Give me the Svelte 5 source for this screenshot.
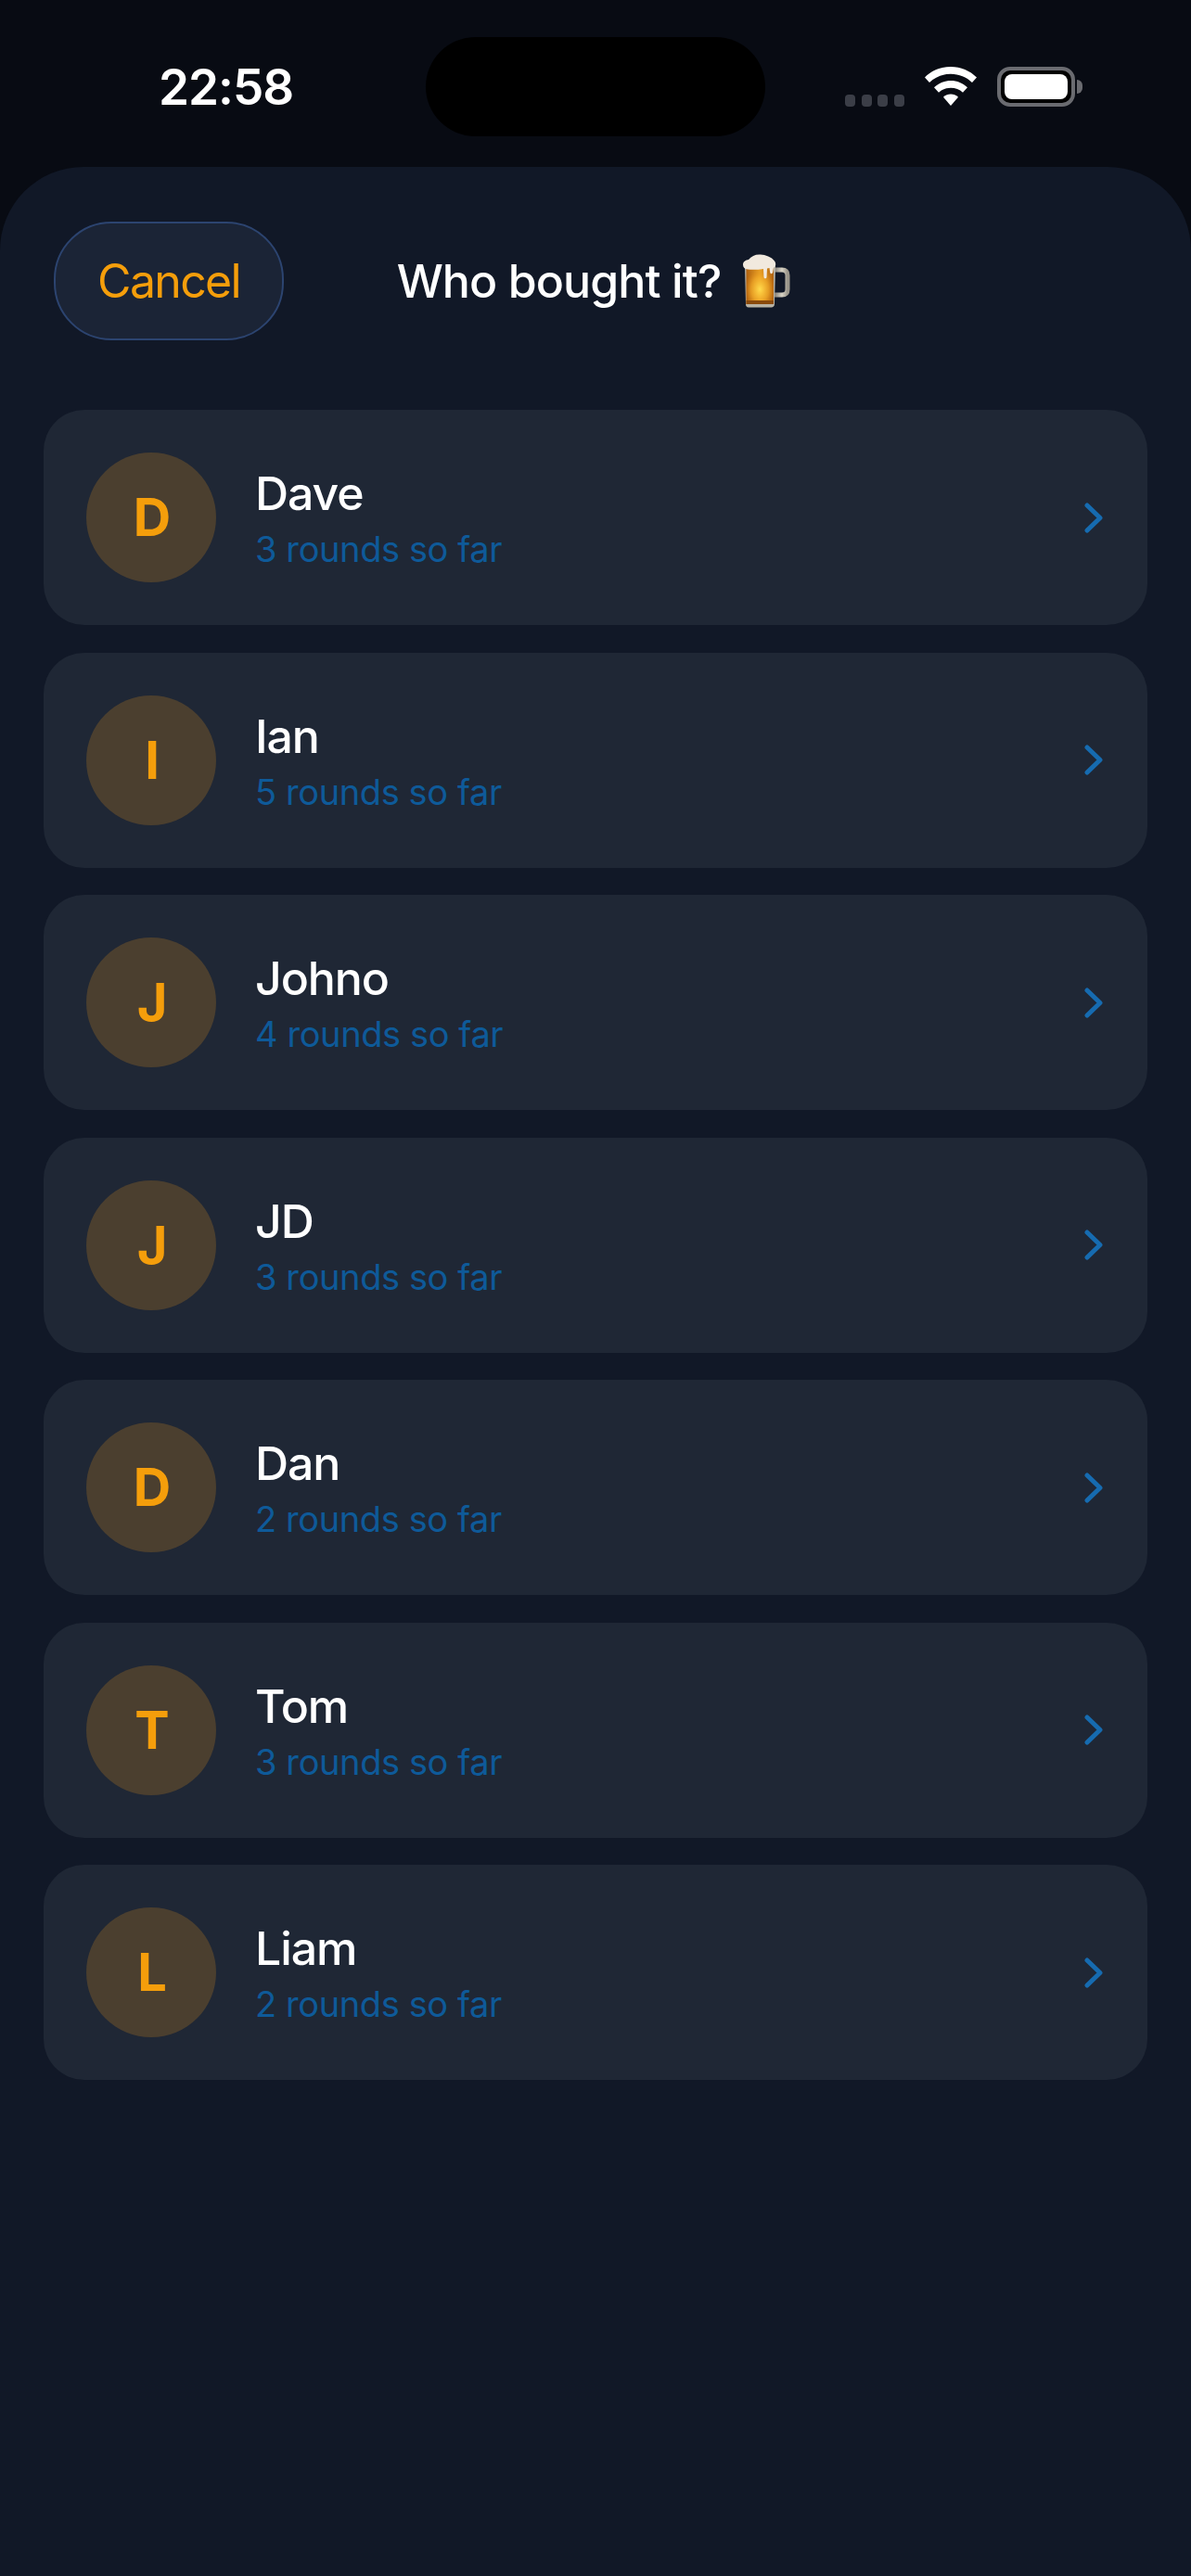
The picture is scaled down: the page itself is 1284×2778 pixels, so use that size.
<script>
  const people = [
    { name: 'Dave', rounds: 3 },
    { name: 'Ian', rounds: 5 },
    { name: 'Johno', rounds: 4 },
    { name: 'JD', rounds: 3 },
    { name: 'Dan', rounds: 2 },
    { name: 'Tom', rounds: 3 },
    { name: 'Liam', rounds: 2 }
  ];
</script>

<div class="page">
  <div class="status">
    <div class="time">22:58</div>
    <div class="island"></div>
    <div class="indicators">
      <div class="dots"><i></i><i></i><i></i><i></i></div>
      <svg class="wifi" viewBox="0 0 56 42" width="56" height="42">
        <path fill="#fff" d="M28 0C17 0 7.500 4.200 0 11.500L5 17C11 11.300 19 7.800 28 7.800S45 11.300 51 17L56 11.500C48.500 4.200 39 0 28 0Z"/>
        <path fill="#fff" d="M28 15C21 15 15 17.700 10 22.300L15 27.800C18.500 24.600 23 22.800 28 22.800S37.500 24.600 41 27.800L46 22.300C41 17.700 35 15 28 15Z"/>
        <path fill="#fff" d="M28 29.500C25 29.500 22.300 30.600 20 32.700L28 42L36 32.700C33.700 30.600 31 29.500 28 29.500Z"/>
      </svg>
      <div class="battery">
        <div class="shell"><div class="fill"></div></div>
        <div class="nub"></div>
      </div>
    </div>
  </div>

  <main class="sheet">
    <header class="head">
      <button class="cancel">Cancel</button>
      <h1 class="title">Who bought it?
        <svg class="beer" viewBox="0 0 51 58" width="51" height="58">
          <defs>
            <linearGradient id="ale" x1="0" x2="1" y1="0" y2="0">
              <stop offset="0" stop-color="#b0600f"/>
              <stop offset="0.5" stop-color="#e8a024"/>
              <stop offset="1" stop-color="#b0620f"/>
            </linearGradient>
            <radialGradient id="glow" cx="0.5" cy="0.6" r="0.55">
              <stop offset="0" stop-color="#ffdb4d"/>
              <stop offset="0.6" stop-color="#f7b02b" stop-opacity="0.6"/>
              <stop offset="1" stop-color="#e08a1a" stop-opacity="0"/>
            </radialGradient>
            <linearGradient id="metal" x1="0" x2="1" y1="0" y2="0">
              <stop offset="0" stop-color="#77726a"/>
              <stop offset="0.6" stop-color="#d9d4c6"/>
              <stop offset="1" stop-color="#9a958a"/>
            </linearGradient>
          </defs>
          <path fill="none" stroke="url(#metal)" stroke-width="5" d="M33 17H42C46 17 48 19 48 23V38C48 42 46 44 42 44H33"/>
          <path fill="#b8b2a4" d="M2 13H35L34 54C34 56 32.500 57.500 30.500 57.500H6C4 57.500 3 56 3 54Z"/>
          <rect x="3.500" y="14" width="29.500" height="40" fill="url(#ale)"/>
          <rect x="3.500" y="14" width="29.500" height="40" fill="url(#glow)"/>
          <rect x="3.500" y="50" width="29.500" height="4" fill="#8a4a0c"/>
          <path fill="#f1e9de" d="M0 11.500C0 8 3 6.500 6 6C9 2 14 0 19 0.500C24 0.800 31 3 34 7.500C36 10 35.500 14 33 14.500L32 20C31.700 21.500 29.500 21.500 29.200 20L28.500 15L26 15.500L25.500 25C25.300 26.800 22.700 26.800 22.500 25L22 16C16 17 9 17 5 16.500C2 16.200 0 14.500 0 11.500Z"/>
        </svg>
      </h1>
      <span></span>
    </header>

    <ul class="list">
      {#each people as p}
        <li class="row">
          <div class="avatar">{p.name[0]}</div>
          <div class="info">
            <div class="name">{p.name}</div>
            <div class="sub">{p.rounds} rounds so far</div>
          </div>
          <svg class="chev" viewBox="0 0 20 33" width="20" height="33">
            <path d="M3 3L17 16.500L3 30" fill="none" stroke="#166bb0" stroke-width="5" stroke-linecap="round" stroke-linejoin="round"/>
          </svg>
        </li>
      {/each}
    </ul>
  </main>
</div>

<style>
  :global(body) {
    margin: 0;
    background: #080b13;
  }
  .page {
    width: 1284px;
    height: 2778px;
    display: flex;
    flex-direction: column;
    background: #080b13;
    font-family: Inter, "Liberation Sans", sans-serif;
    overflow: hidden;
  }
  .status {
    height: 180px;
    flex: none;
    display: grid;
    grid-template-columns: 1fr 366px 1fr;
    box-sizing: border-box;
    padding-top: 40px;
    align-items: start;
  }
  .time {
    color: #fff;
    font-size: 53px;
    font-weight: 600;
    line-height: 64px;
    letter-spacing: -1px;
    padding-left: 171px;
    margin-top: 22px;
  }
  .island {
    height: 107px;
    border-radius: 54px;
    background: #000;
  }
  .indicators {
    display: flex;
    align-items: flex-start;
    padding: 32px 0 0 86px;
  }
  .dots {
    display: flex;
    gap: 6.600px;
    margin: 30px 22px 0 0;
  }
  .dots i {
    width: 11px;
    height: 13px;
    border-radius: 4px;
    background: #3b3e47;
  }
  .wifi {
    margin-right: 22px;
  }
  .battery {
    display: flex;
    align-items: center;
    height: 43px;
  }
  .shell {
    width: 84px;
    height: 43px;
    box-sizing: border-box;
    border: 4px solid #6a6b70;
    border-radius: 14px;
    padding: 4px;
    background: #000;
  }
  .fill {
    height: 100%;
    border-radius: 8px;
    background: #fff;
  }
  .nub {
    width: 6px;
    height: 15px;
    margin-left: 2px;
    border-radius: 0 6px 6px 0;
    background: #6a6b70;
  }
  .sheet {
    flex: 1;
    background: #111827;
    border-radius: 90px 90px 0 0;
  }
  .head {
    display: grid;
    grid-template-columns: 1fr auto 1fr;
    align-items: center;
    padding: 59px 62px 0 58px;
  }
  .cancel {
    justify-self: start;
    width: 248px;
    height: 128px;
    box-sizing: border-box;
    border: 2px solid #2c4470;
    border-radius: 62px;
    background: #1b2436;
    color: #f59e0b;
    font: 400 50px Inter, "Liberation Sans", sans-serif;
    letter-spacing: -1.700px;
    padding: 0;
  }
  .title {
    margin: 0;
    color: #fff;
    font-size: 50px;
    font-weight: 550;
    letter-spacing: -0.900px;
    line-height: 60px;
    white-space: nowrap;
    display: flex;
    align-items: center;
    gap: 24px;
  }
  .beer {
    flex: none;
  }
  .list {
    list-style: none;
    margin: 75px 47px 0;
    padding: 0;
    display: flex;
    flex-direction: column;
    gap: 29.500px;
  }
  .row {
    height: 232px;
    border-radius: 44px;
    background: #1f2735;
    display: flex;
    align-items: center;
    padding: 0 48px 0 46px;
  }
  .avatar {
    width: 140px;
    height: 140px;
    flex: none;
    border-radius: 50%;
    background: #4b3f2f;
    color: #f59e0b;
    font-size: 56px;
    font-weight: 700;
    padding-left: 2px;
    box-sizing: border-box;
    display: flex;
    align-items: center;
    justify-content: center;
  }
  .info {
    flex: 1;
    margin-left: 42px;
    padding-top: 4px;
  }
  .name {
    color: #fff;
    font-size: 50px;
    font-weight: 550;
    letter-spacing: -1.100px;
    line-height: 60px;
    margin-top: -3px;
  }
  .sub {
    color: #0e5a99;
    font-size: 38px;
    letter-spacing: -0.400px;
    line-height: 46px;
    margin-top: 7px;
  }
  .chev {
    flex: none;
  }
</style>
